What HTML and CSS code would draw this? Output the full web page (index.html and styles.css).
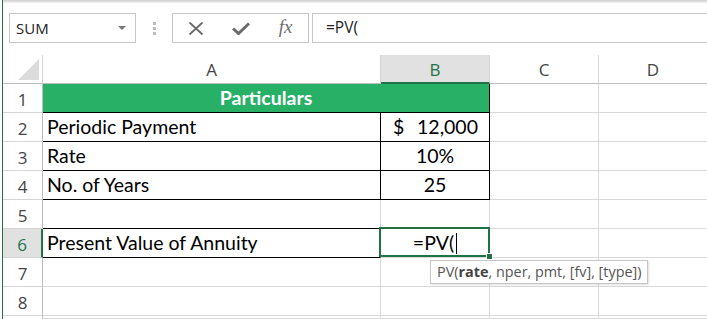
FILE: index.html
```html
<!DOCTYPE html>
<html lang="en">
<head>
  <meta charset="UTF-8" />
  <title>PV formula</title>
  <link rel="stylesheet" href="styles.css">
</head>
<body>
  <div class="app">
    <div class="ribbon-edge"></div>

    <div class="formula-bar">
      <div class="name-box"><span>SUM</span><span class="caret"></span></div>
      <div class="grip"><i></i><i></i><i></i></div>
      <div class="fx-buttons">
        <span class="slot">
          <svg width="16" height="15" viewBox="0 0 16 15"><path d="M1.5 1.5 L14.5 13.5 M14.5 1.5 L1.5 13.5" stroke="#6a6a6a" stroke-width="1.8" fill="none"/></svg>
        </span>
        <span class="slot">
          <svg width="18" height="13" viewBox="0 0 18 13"><path d="M1 6.5 L6.5 11.5 L17 1.5" stroke="#6a6a6a" stroke-width="3" fill="none" stroke-linejoin="miter"/></svg>
        </span>
        <span class="slot fx">fx</span>
      </div>
      <div class="formula-input">=PV(</div>
    </div>

    <div class="sheet">
      <div class="corner">
        <svg width="39" height="28" viewBox="0 0 39 28"><polygon points="15,25 36,4 36,25" fill="#dcdcdc"/></svg>
      </div>
      <div class="col-head">A</div>
      <div class="col-head active">B</div>
      <div class="col-head">C</div>
      <div class="col-head">D</div>

      <div class="row-head">1</div>
      <div class="cell title">Particulars</div>
      <div class="cell"></div>
      <div class="cell"></div>

      <div class="row-head">2</div>
      <div class="cell bb br">Periodic Payment</div>
      <div class="cell bb br money"><span>$</span><span>12,000</span></div>
      <div class="cell"></div>
      <div class="cell"></div>

      <div class="row-head">3</div>
      <div class="cell bb br">Rate</div>
      <div class="cell bb br center">10%</div>
      <div class="cell"></div>
      <div class="cell"></div>

      <div class="row-head">4</div>
      <div class="cell bb br">No. of Years</div>
      <div class="cell bb br center">25</div>
      <div class="cell"></div>
      <div class="cell"></div>

      <div class="row-head">5</div>
      <div class="cell bb"></div>
      <div class="cell"></div>
      <div class="cell"></div>
      <div class="cell"></div>

      <div class="row-head active">6</div>
      <div class="cell bb">Present Value of Annuity</div>
      <div class="cell center editing">=PV(<span class="cursor"></span></div>
      <div class="cell"></div>
      <div class="cell"></div>

      <div class="row-head">7</div>
      <div class="cell"></div>
      <div class="cell"></div>
      <div class="cell"></div>
      <div class="cell"></div>

      <div class="row-head">8</div>
      <div class="cell"></div>
      <div class="cell"></div>
      <div class="cell"></div>
      <div class="cell"></div>

      <div class="row-head tail"></div>
      <div class="cell tail"></div>
      <div class="cell tail"></div>
      <div class="cell tail"></div>
      <div class="cell tail"></div>
    </div>

    <div class="tip">PV(<b>rate</b>, nper, pmt, [fv], [type])</div>
  </div>
</body>
</html>
```

FILE: styles.css
```css
* { box-sizing: border-box; }
html, body { margin: 0; height: 319px; overflow: hidden; background: #fff; }
body { font-family: "Open Sans", "DejaVu Sans", sans-serif; color: #444; }

.app { position: relative; margin-left: 2px; border-left: 1px solid #217346; height: 319px; }
.ribbon-edge { height: 3px; background: linear-gradient(#cfcfcf, #f4f4f4); }

/* formula bar */
.formula-bar { display: flex; align-items: center; height: 30px; margin-top: 10px; }
.name-box { display: flex; align-items: center; width: 127px; height: 30px; margin-left: 6px; padding: 0 9px 0 6px; border: 1px solid #c6c6c6; font-size: 15px; color: #222; }
.caret { margin-left: auto; border-top: 4px solid #777; border-left: 4px solid transparent; border-right: 4px solid transparent; }
.grip { display: flex; flex-direction: column; gap: 2px; margin-left: 17px; }
.grip i { display: block; width: 3px; height: 3px; background: #bdbdbd; }
.fx-buttons { display: flex; align-items: center; width: 137px; height: 30px; margin-left: 16px; border: 1px solid #c6c6c6; }
.slot { display: flex; justify-content: center; align-items: center; width: 45px; }
.fx { font-family: "Liberation Serif", serif; font-style: italic; font-size: 19px; color: #6f6f6f; padding-bottom: 2px; }
.formula-input { flex: 1; height: 30px; margin-left: 3px; padding-left: 13px; border: 1px solid #c6c6c6; border-right: none; font-size: 15.5px; line-height: 27px; color: #222; }

/* sheet grid */
.sheet { display: grid; grid-template-columns: 40px 338px 109px 109px 109px; grid-template-rows: repeat(9, 29px) 3px; margin-top: 12px; }
.corner { border-right: 1px solid #d4d4d4; border-bottom: 1px solid #bdbdbd; }
.corner svg { display: block; }
.col-head { display: flex; justify-content: center; align-items: center; border-right: 1px solid #d4d4d4; border-bottom: 1px solid #bdbdbd; font-size: 17px; padding-top: 1px; }
.col-head.active { background: #e1e1e1; color: #217346; border-bottom: 2px solid #217346; }
.row-head { display: flex; justify-content: center; align-items: center; border-right: 1px solid #bdbdbd; border-bottom: 1px solid #d4d4d4; font-size: 17px; padding-top: 2px; }
.row-head.active { background: #e1e1e1; color: #217346; border-right: 2px solid #217346; }
.tail { border-bottom: none; }

.cell { display: flex; align-items: flex-end; padding: 0 4px 2px; border-right: 1px solid #d9d9d9; border-bottom: 1px solid #d9d9d9; font-family: Lato, "Open Sans", sans-serif; font-size: 19.5px; line-height: 24px; color: #000; white-space: nowrap; }
.cell.bb { border-bottom-color: #000; }
.cell.br { border-right-color: #000; }
.cell.center { justify-content: center; }
.cell.money { justify-content: space-between; padding: 0 11px 2px 12px; }
.cell.title { grid-column: span 2; justify-content: center; align-items: center; background: #29b067; color: #fff; font-weight: bold; border-right-color: #000; border-bottom-color: #000; padding: 0 0 1px; }

.cell.editing { position: relative; padding-left: 4px; }
.cell.editing::after { content: ""; position: absolute; top: -2px; left: -2px; right: -1px; bottom: 0; border: 2px solid #217346; }
.cell.editing::before { content: ""; position: absolute; right: -4px; bottom: -3px; width: 5px; height: 5px; background: #217346; border: 1px solid #fff; box-sizing: content-box; z-index: 1; }
.cursor { display: inline-block; width: 1px; height: 21px; background: #000; margin: 0 0 1px 2px; align-self: flex-end; }

.tip { position: absolute; left: 427px; top: 260px; width: 218px; height: 24px; padding-left: 6px; border: 1px solid #c6c6c6; background: #fff; box-shadow: 1px 1px 2px rgba(0,0,0,0.12); font-size: 14.4px; line-height: 22px; color: #555; white-space: nowrap; }
.tip b { color: #444; }
```
